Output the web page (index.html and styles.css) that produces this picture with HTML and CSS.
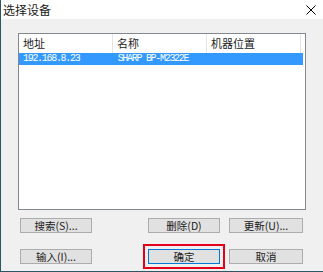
FILE: index.html
```html
<!DOCTYPE html>
<html>
<head>
    <title>选择设备</title>
    <link rel="stylesheet" href="styles.css">
</head>
<body>
    <div class="window">
        <!-- Title bar -->
        <div class="titlebar">
            <span class="title">选择设备</span>
            <svg class="close" width="10" height="10" viewBox="0 0 10 10">
                <path d="M0.5 0.5 L9.5 9.5 M9.5 0.5 L0.5 9.5" stroke="#000" stroke-width="1" fill="none"/>
            </svg>
        </div>

        <div class="content">
            <div class="list">
                <div class="list-head">
                    <div class="col">地址</div>
                    <div class="col">名称</div>
                    <div class="col last">机器位置</div>
                </div>
                <div class="row selected">
                    <div class="col">192.168.8.23</div>
                    <div class="col">SHARP BP-M2322E</div>
                    <div class="col last"></div>
                </div>
            </div>

            <div class="buttons">
                <div class="btn-row">
                    <button class="btn gap-after">搜索(S)...</button>
                    <button class="btn">删除(D)</button>
                    <button class="btn wide">更新(U)...</button>
                </div>
                <div class="btn-row">
                    <button class="btn gap-after">输入(I)...</button>
                    <button class="btn default marked">确定</button>
                    <button class="btn wide">取消</button>
                </div>
            </div>
        </div>
    </div>
</body>
</html>
```

FILE: styles.css
```css
body {
    margin: 0;
    font-family: "Noto Sans CJK SC", "Liberation Sans", sans-serif;
    background: #f0f0f0;
}

.window {
    width: 323px;
    height: 272px;
    box-sizing: border-box;
    background: #f0f0f0;
    border-left: 1px solid #2b5666;
    border-bottom: 1px solid #2b5666;
}

.titlebar {
    height: 19px;
    background: #ffffff;
    display: flex;
    align-items: center;
    justify-content: space-between;
    padding: 0 7px 0 2px;
}

.title {
    font-size: 12px;
    color: #1a1a1a;
    line-height: 19px;
}

.content {
    padding: 14px 17px 0 17px;
}

.list {
    width: 288px;
    height: 177px;
    box-sizing: border-box;
    border: 1px solid #828790;
    background: #ffffff;
}

.list-head {
    display: flex;
    height: 19px;
    align-items: center;
    font-size: 11px;
    color: #1a1a1a;
}

.list-head .col {
    width: 94px;
    padding-left: 4px;
    box-sizing: border-box;
    border-right: 1px solid #e5e5e5;
    line-height: 19px;
}

.row {
    display: flex;
    height: 12px;
    width: 284px;
    font-family: "Liberation Mono", monospace;
    font-size: 10px;
    letter-spacing: -1.3px;
    line-height: 12px;
}

.row .col {
    width: 95px;
    padding-left: 4px;
    box-sizing: border-box;
    white-space: nowrap;
}

.row.selected {
    background: #3399ff;
    color: #ffffff;
}

.buttons {
    padding-left: 2px;
}

.btn-row {
    display: flex;
    gap: 9px;
    margin-top: 8px;
}

.btn-row + .btn-row {
    margin-top: 16px;
}

.btn {
    width: 72px;
    height: 15px;
    padding: 0;
    background: #e1e1e1;
    border: 1px solid #adadad;
    font-family: "Noto Sans CJK SC", "Liberation Sans", sans-serif;
    font-size: 10.5px;
    line-height: 13px;
    color: #1a1a1a;
}

.btn.gap-after {
    margin-right: 47px;
}

.btn.wide {
    width: 74px;
}

.btn.default {
    border-color: #0078d7;
}

.btn.marked {
    outline: 2px solid #e3001b;
    outline-offset: 3px;
}
```
